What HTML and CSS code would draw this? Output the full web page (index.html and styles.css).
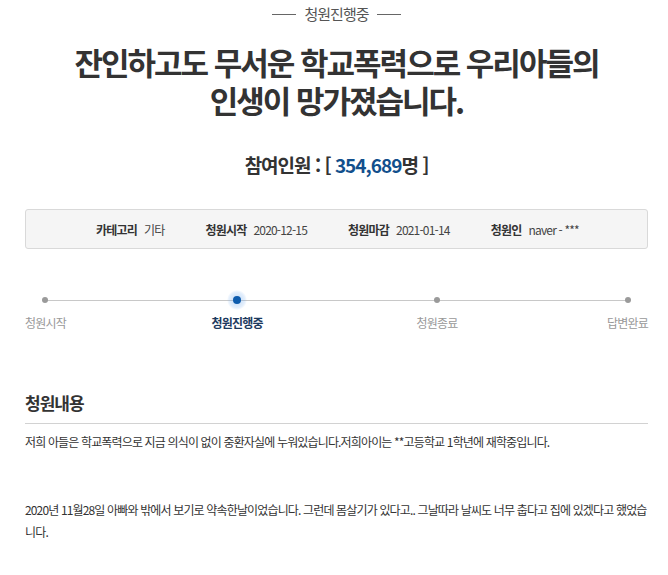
FILE: index.html
```html
<!DOCTYPE html>
<html lang="ko">
<head>
<meta charset="utf-8">
<link rel="stylesheet" href="styles.css">
</head>
<body>
<div class="page">
  <div class="status"><span class="dash"></span><span class="status-text">청원진행중</span><span class="dash"></span></div>
  <h1 class="title">잔인하고도 무서운 학교폭력으로 우리아들의<br>인생이 망가졌습니다.</h1>
  <div class="count">참여인원 : [ <span class="num">354,689</span>명 ]</div>
  <div class="info">
    <div class="info-item"><span class="k">카테고리</span><span class="v">기타</span></div>
    <div class="info-item"><span class="k">청원시작</span><span class="v">2020-12-15</span></div>
    <div class="info-item"><span class="k">청원마감</span><span class="v">2021-01-14</span></div>
    <div class="info-item"><span class="k">청원인</span><span class="v">naver - ***</span></div>
  </div>
  <div class="steps">
    <div class="step"><span class="dot"></span><span class="label">청원시작</span></div>
    <div class="step active"><span class="dot"></span><span class="label">청원진행중</span></div>
    <div class="step"><span class="dot"></span><span class="label">청원종료</span></div>
    <div class="step"><span class="dot"></span><span class="label">답변완료</span></div>
  </div>
  <h2 class="section">청원내용</h2>
  <p class="p1">저희 아들은 학교폭력으로 지금 의식이 없이 중환자실에 누워있습니다.저희아이는 **고등학교 1학년에 재학중입니다.</p>
  <p class="p2">2020년 11월28일 아빠와 밖에서 보기로 약속한날이었습니다. 그런데 몸살기가 있다고.. 그날따라 날씨도 너무 춥다고 집에 있겠다고 했었습니다.</p>
</div>
</body>
</html>
```
FILE: styles.css
```css
html, body {
  margin: 0;
  padding: 0;
  background: #fff;
}
body {
  font-family: "Noto Sans CJK KR", "Noto Sans", sans-serif;
  color: #333;
}
.page {
  padding: 0 20px 0 25px;
}
.status {
  height: 28px;
  display: flex;
  align-items: center;
  justify-content: center;
  gap: 8px;
}
.status-text {
  font-size: 15px;
  line-height: 28px;
  color: #555;
  letter-spacing: -1px;
}
.dash {
  width: 24px;
  height: 1px;
  background: #666;
}
.title {
  margin: 15px 0 0;
  font-size: 31px;
  line-height: 38px;
  font-weight: 700;
  text-align: center;
  letter-spacing: -2px;
  color: #333;
}
.count {
  margin-top: 31px;
  font-size: 19px;
  line-height: 30px;
  font-weight: 700;
  text-align: center;
  letter-spacing: -1px;
  color: #333;
}
.count .num {
  color: #124f8c;
}
.info {
  margin-top: 29px;
  height: 38px;
  border: 1px solid #d9d9d9;
  border-radius: 3px;
  background: #f5f5f5;
  display: flex;
  align-items: center;
  padding-left: 70px;
  gap: 41px;
  font-size: 12px;
  letter-spacing: -0.8px;
}
.info-item {
  display: flex;
  gap: 7px;
}
.info-item .k {
  font-weight: 700;
  color: #333;
}
.info-item .v {
  color: #444;
}
.steps {
  position: relative;
  margin-top: 41px;
  display: flex;
  justify-content: space-between;
}
.steps::before {
  content: "";
  position: absolute;
  left: 21px;
  right: 21px;
  top: 10px;
  height: 1px;
  background: #c8c8c8;
}
.step {
  display: flex;
  flex-direction: column;
  align-items: center;
  position: relative;
}
.step.active {
  left: -4px;
}
.dot {
  height: 20px;
  width: 20px;
  display: flex;
  align-items: center;
  justify-content: center;
}
.dot::after {
  content: "";
  width: 6px;
  height: 6px;
  border-radius: 50%;
  background: #9a9a9a;
}
.step.active .dot {
  border-radius: 50%;
  background: radial-gradient(circle, rgba(80, 150, 230, 0.35) 0%, rgba(120, 175, 240, 0.2) 55%, rgba(255, 255, 255, 0) 72%);
}
.step.active .dot::after {
  width: 8px;
  height: 8px;
  background: #0e5cad;
}
.label {
  margin-top: 5px;
  font-size: 12px;
  line-height: 16px;
  color: #999;
  letter-spacing: -0.8px;
}
.step.active .label {
  color: #1c3a5e;
  font-weight: 700;
}
.section {
  margin: 60px 0 0;
  padding-bottom: 8px;
  border-bottom: 1px solid #d2d2d2;
  font-size: 17px;
  line-height: 24px;
  font-weight: 700;
  letter-spacing: -1px;
  color: #333;
}
.p1, .p2 {
  font-size: 12px;
  line-height: 22px;
  letter-spacing: -0.85px;
  color: #333;
  margin: 0;
  word-break: break-all;
}
.p1 {
  margin-top: 7px;
}
.p2 {
  margin-top: 46px;
}
```
